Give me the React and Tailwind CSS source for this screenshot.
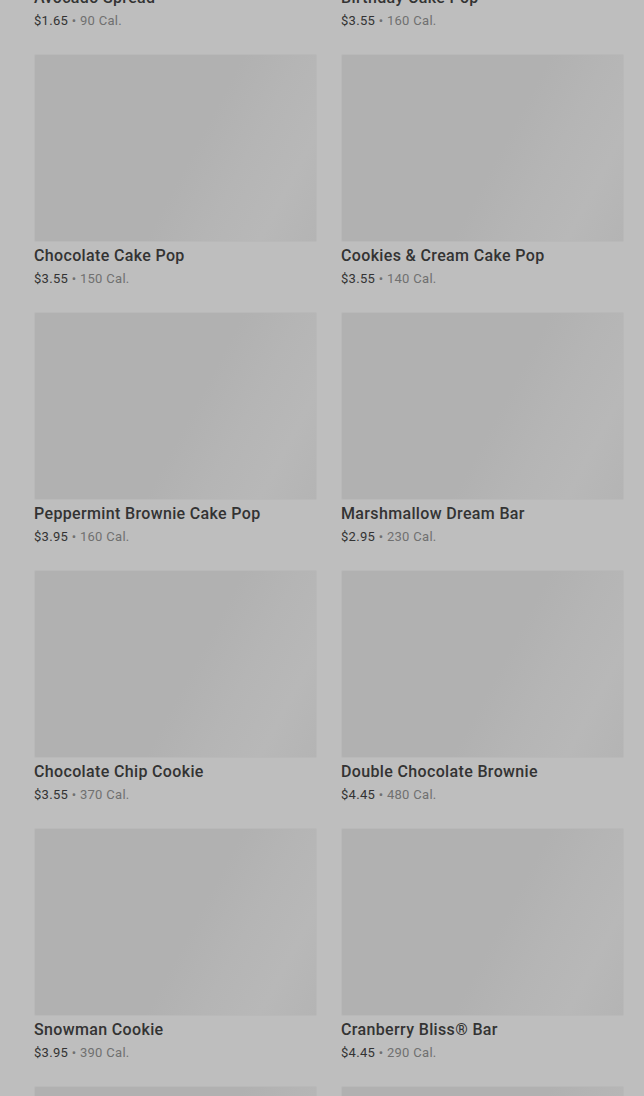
import React from "react";

const items = [
  ["Avocado Spread", "$1.65", "90 Cal."],
  ["Birthday Cake Pop", "$3.55", "160 Cal."],
  ["Chocolate Cake Pop", "$3.55", "150 Cal."],
  ["Cookies & Cream Cake Pop", "$3.55", "140 Cal."],
  ["Peppermint Brownie Cake Pop", "$3.95", "160 Cal."],
  ["Marshmallow Dream Bar", "$2.95", "230 Cal."],
  ["Chocolate Chip Cookie", "$3.55", "370 Cal."],
  ["Double Chocolate Brownie", "$4.45", "480 Cal."],
  ["Snowman Cookie", "$3.95", "390 Cal."],
  ["Cranberry Bliss® Bar", "$4.45", "290 Cal."],
  ["Lemon Loaf", "$3.45", "470 Cal."],
  ["Iced Lemon Loaf", "$3.45", "470 Cal."],
];

function Card({ name, price, cal }) {
  return (
    <div className="flex flex-col">
      <div className="h-[188px] rounded-[2px] border border-[#b9b9b9] bg-[linear-gradient(118deg,#b1b1b1_0%,#b1b1b1_55%,#b5b5b5_70%,#b8b8b8_85%,#b4b4b4_100%)]" />
      <div className="mt-[2px] text-[16px] leading-[24px] font-medium text-[#333333] tracking-[0.35px]">
        {name}
      </div>
      <div className="text-[13px] leading-[22px] text-[#333333] tracking-[0.3px]">
        {price}
        <span className="text-[#707070]"> • {cal}</span>
      </div>
    </div>
  );
}

export default function App() {
  return (
    <div
      className="h-[1096px] overflow-hidden bg-[#bebebe]"
      style={{ fontFamily: "Roboto, 'Liberation Sans', sans-serif" }}
    >
      <div className="-mt-[204px] pl-[34px] pr-[20px] grid grid-cols-2 gap-x-[24px] gap-y-[22px]">
        {items.map(([n, p, c], i) => (
          <Card key={i} name={n} price={p} cal={c} />
        ))}
      </div>
    </div>
  );
}
